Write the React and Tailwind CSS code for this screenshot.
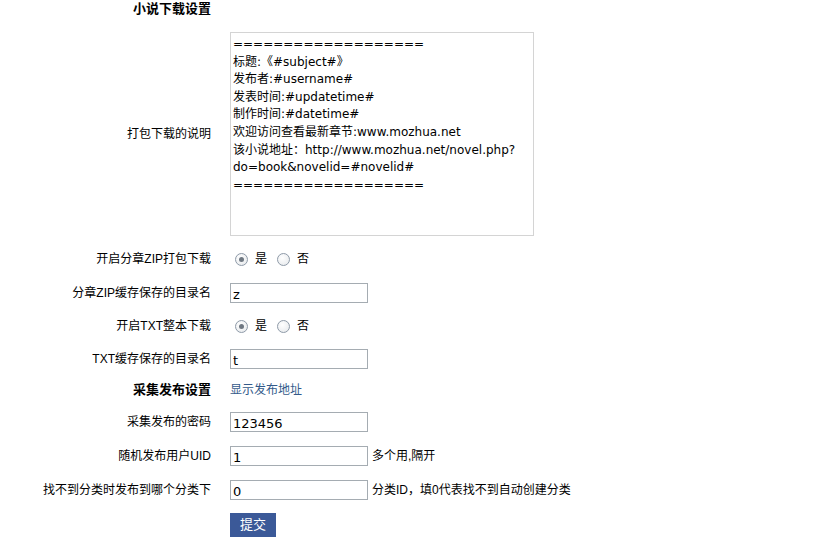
import React, { useState } from 'react';

const font = "font-['Liberation_Sans','Noto_Sans_CJK_SC',sans-serif]";

function Radio({ checked, onClick }) {
  return (
    <span
      onClick={onClick}
      className="ml-[5px] mr-[7px] inline-flex h-[13px] w-[13px] items-center justify-center rounded-full border border-[#8e9aa8] bg-[radial-gradient(circle_at_40%_35%,#ffffff,#e4e7ea)]"
    >
      {checked && <span className="h-[5px] w-[5px] rounded-full bg-[#6f7882]" />}
    </span>
  );
}

function YesNo({ value, onChange }) {
  return (
    <div className="flex items-center text-[12px] text-black">
      <Radio checked={value} onClick={() => onChange(true)} />
      <span className="mr-[5px]">是</span>
      <Radio checked={!value} onClick={() => onChange(false)} />
      <span>否</span>
    </div>
  );
}

function TextInput({ value, onChange }) {
  return (
    <input
      type="text"
      value={value}
      onChange={(e) => onChange(e.target.value)}
      className="h-[20px] w-[138px] border border-[#a5acb2] bg-white px-[2px] pt-[3px] text-[13px] leading-[16px] text-black outline-none font-['DejaVu_Sans','Noto_Sans_CJK_SC',sans-serif]"
    />
  );
}

function Row({ label, bold, h, children }) {
  return (
    <div className="flex items-center" style={{ height: h }}>
      <div className={`w-[211px] shrink-0 text-right ${bold ? 'text-[13px] font-bold' : 'text-[12px]'}`}>
        {label}
      </div>
      <div className="ml-[19px] flex items-center">{children}</div>
    </div>
  );
}

const defaultNote = `===================
标题:《#subject#》
发布者:#username#
发表时间:#updatetime#
制作时间:#datetime#
欢迎访问查看最新章节:www.mozhua.net
该小说地址：http://www.mozhua.net/novel.php?
do=book&novelid=#novelid#
===================`;

export default function App() {
  const [note, setNote] = useState(defaultNote);
  const [zipOn, setZipOn] = useState(true);
  const [txtOn, setTxtOn] = useState(true);
  const [zipDir, setZipDir] = useState('z');
  const [txtDir, setTxtDir] = useState('t');
  const [pwd, setPwd] = useState('123456');
  const [uid, setUid] = useState('1');
  const [cat, setCat] = useState('0');

  return (
    <div className={`min-h-[554px] w-[823px] bg-white text-black ${font}`}>
      <Row label="小说下载设置" bold h={18} />

      <div className="mt-[14px] mb-[6px] flex items-center">
        <div className="w-[211px] shrink-0 text-right text-[12px]">打包下载的说明</div>
        <textarea
          value={note}
          onChange={(e) => setNote(e.target.value)}
          className="ml-[19px] h-[204px] w-[304px] resize-none border border-[#d4d4d4] bg-white px-[2px] pt-[3px] text-[12px] leading-[17.6px] text-black outline-none font-['DejaVu_Sans','Noto_Sans_CJK_SC',sans-serif]"
        />
      </div>

      <Row label="开启分章ZIP打包下载" h={34}>
        <YesNo value={zipOn} onChange={setZipOn} />
      </Row>
      <Row label="分章ZIP缓存保存的目录名" h={33}>
        <TextInput value={zipDir} onChange={setZipDir} />
      </Row>
      <Row label="开启TXT整本下载" h={34}>
        <YesNo value={txtOn} onChange={setTxtOn} />
      </Row>
      <Row label="TXT缓存保存的目录名" h={31}>
        <TextInput value={txtDir} onChange={setTxtDir} />
      </Row>
      <Row label="采集发布设置" bold h={31}>
        <a href="#" className="text-[12px] text-[#335a8a]">显示发布地址</a>
      </Row>
      <Row label="采集发布的密码" h={34}>
        <TextInput value={pwd} onChange={setPwd} />
      </Row>
      <Row label="随机发布用户UID" h={34}>
        <TextInput value={uid} onChange={setUid} />
        <span className="ml-[4px] text-[12px]">多个用,隔开</span>
      </Row>
      <Row label="找不到分类时发布到哪个分类下" h={34}>
        <TextInput value={cat} onChange={setCat} />
        <span className="ml-[4px] text-[12px]">分类ID，填0代表找不到自动创建分类</span>
      </Row>
      <Row label="" h={36}>
        <button type="submit" className="h-[24px] w-[46px] bg-[#3b5998] text-[13px] text-white">
          提交
        </button>
      </Row>
    </div>
  );
}
